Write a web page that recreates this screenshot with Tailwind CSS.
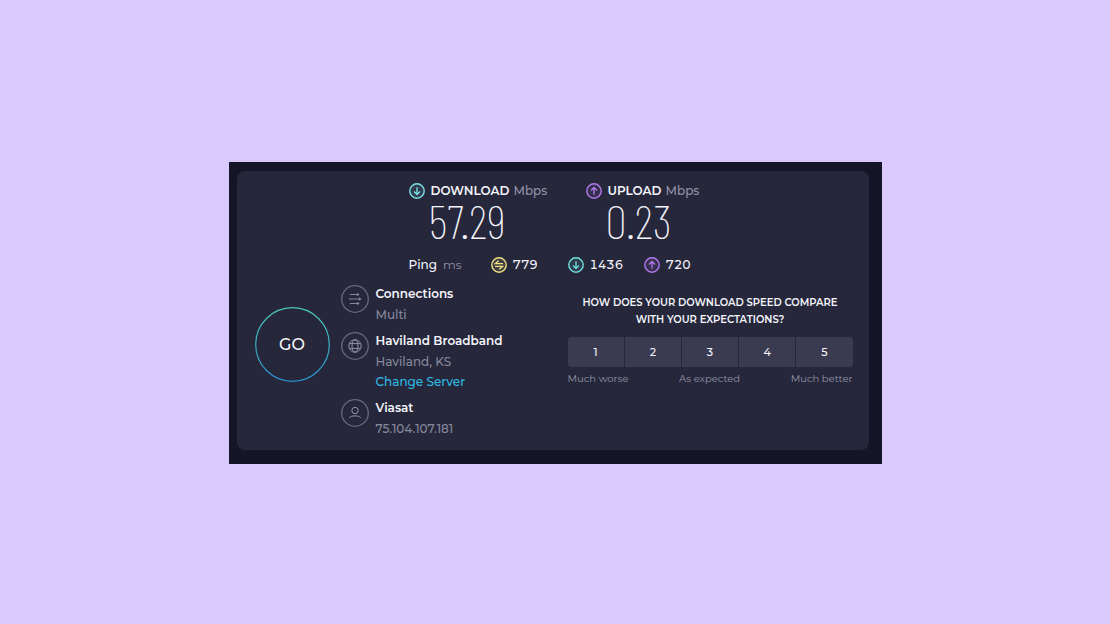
<!DOCTYPE html>
<html lang="en">
  <head>
    <meta charset="UTF-8" />
    <meta name="viewport" content="width=device-width, initial-scale=1.0" />
    <title>Speed Test Result</title>
    <script src="https://cdn.jsdelivr.net/npm/@tailwindcss/browser@4"></script>
  </head>
  <body
    class="min-h-screen bg-[#dac9fd] flex items-center justify-center pt-0.5 font-['Montserrat','Inter',sans-serif] text-[#f4f4fa]"
  >
    <!-- Shared icons -->
    <svg class="hidden">
      <symbol id="icon-arrow" viewBox="0 0 16 16">
        <circle cx="8" cy="8" r="7.2" fill="currentColor" fill-opacity="0.12" stroke="currentColor" stroke-width="1.4" />
        <path d="M8 4.2v7.2M5 8.5l3 3 3-3" fill="none" stroke="currentColor" stroke-width="1.3" />
      </symbol>
      <symbol id="icon-ping" viewBox="0 0 16 16">
        <circle cx="8" cy="8" r="7.2" fill="currentColor" fill-opacity="0.12" stroke="currentColor" stroke-width="1.4" />
        <path d="M12 6.7H4.3l3.4-3M4 9.3h7.7l-3.4 3" fill="none" stroke="currentColor" stroke-width="1.3" />
      </symbol>
    </svg>

    <main class="w-full max-w-[653px] bg-[#141526] pt-[9px] pr-[13px] pb-[14px] pl-2">
      <div class="bg-[#26273b] rounded-lg pt-3 pr-4 pb-[11px] pl-[18px]">
        <!-- Results -->
        <section class="pl-[154px]">
          <div class="flex">
            <div class="w-[177px]">
              <h2 class="flex items-center text-xs leading-4 font-semibold whitespace-nowrap">
                <svg class="size-4 mr-1.5 text-[#7ee0e6]"><use href="#icon-arrow" /></svg>
                DOWNLOAD
                <span class="ml-1 font-medium text-[#9193a8]">Mbps</span>
              </h2>
              <p class="pl-5 text-[48px] leading-[42px] font-extralight font-['Barlow_Condensed','Roboto_Condensed',sans-serif]">57.29</p>
            </div>
            <div>
              <h2 class="flex items-center text-xs leading-4 font-semibold whitespace-nowrap">
                <svg class="size-4 mr-1.5 rotate-180 text-[#b278ee]"><use href="#icon-arrow" /></svg>
                UPLOAD
                <span class="ml-1 font-medium text-[#9193a8]">Mbps</span>
              </h2>
              <p class="pl-5 text-[48px] leading-[42px] font-extralight font-['Barlow_Condensed','Roboto_Condensed',sans-serif]">0.23</p>
            </div>
          </div>
          <div class="flex items-center mt-3.5 text-xs leading-5 font-medium tabular-nums">
            <p class="flex gap-1.5 w-[82px]">Ping <span class="font-normal text-[#9193a8]">ms</span></p>
            <p class="flex items-center gap-1.5 w-[77px]">
              <svg class="size-4 text-[#f0e184]"><use href="#icon-ping" /></svg>779
            </p>
            <p class="flex items-center gap-1.5 w-[76px]">
              <svg class="size-4 text-[#6fe0dd]"><use href="#icon-arrow" /></svg>1436
            </p>
            <p class="flex items-center gap-1.5">
              <svg class="size-4 rotate-180 text-[#b278ee]"><use href="#icon-arrow" /></svg>720
            </p>
          </div>
        </section>

        <div class="flex items-start mt-2">
          <button
            type="button"
            class="relative mt-6 size-[75px] shrink-0 rounded-full pt-px text-base font-medium cursor-pointer"
          >
            <svg class="absolute inset-0 size-full" viewBox="0 0 75 75" fill="none">
              <defs>
                <linearGradient id="ring" x1="0" y1="0" x2="0" y2="1">
                  <stop offset="0" stop-color="#4bc7b5" />
                  <stop offset="1" stop-color="#2992cd" />
                </linearGradient>
              </defs>
              <circle cx="37.5" cy="37.5" r="36.8" stroke="url(#ring)" stroke-width="1.2" />
            </svg>
            GO
          </button>

          <!-- Connection details -->
          <ul class="flex flex-col gap-[5px] ml-[11px] text-xs leading-5 font-medium text-[#85879c]">
            <li class="flex gap-[7px]">
              <svg class="size-7 mt-0.5 shrink-0" viewBox="0 0 28 28" fill="none" stroke="#85879c">
                <circle cx="14" cy="14" r="13.3" stroke="#686980" stroke-width="1.3" />
                <path d="M9 9.5h8M8 14h11M9 18.5h8" />
                <path d="M16 7.8l2.7 1.7-2.7 1.7zM18 12.3l2.7 1.7-2.7 1.7zM16 16.8l2.7 1.7-2.7 1.7z" fill="#85879c" stroke="none" />
              </svg>
              <div>
                <h3 class="leading-[22px] font-semibold text-[#f4f4fa]">Connections</h3>
                <p>Multi</p>
              </div>
            </li>
            <li class="flex gap-[7px]">
              <svg class="size-7 mt-0.5 shrink-0" viewBox="0 0 28 28" fill="none" stroke="#9193a8">
                <circle cx="14" cy="14" r="13.3" stroke="#686980" stroke-width="1.3" />
                <circle cx="14" cy="14" r="6.2" />
                <ellipse cx="14" cy="14" rx="3" ry="6.2" />
                <path d="M8.5 11.6h11M8.5 16.4h11" />
              </svg>
              <div>
                <h3 class="leading-[22px] font-semibold text-[#f4f4fa]">Haviland Broadband</h3>
                <p>Haviland, KS</p>
                <a href="#" class="block text-[#2fbbe6]">Change Server</a>
              </div>
            </li>
            <li class="flex gap-[7px]">
              <svg class="size-7 mt-0.5 shrink-0" viewBox="0 0 28 28" fill="none" stroke="#9193a8">
                <circle cx="14" cy="14" r="13.3" stroke="#686980" stroke-width="1.3" />
                <circle cx="14" cy="11.5" r="3.2" />
                <path d="M8.2 18.8c1.3-1.3 3.2-1.9 5.8-1.9s4.5.6 5.8 1.9" />
              </svg>
              <div>
                <h3 class="leading-[22px] font-semibold text-[#f4f4fa]">Viasat</h3>
                <p>75.104.107.181</p>
              </div>
            </li>
          </ul>

          <!-- Survey -->
          <section class="ml-auto mt-[11px] w-[285px]">
            <h2 class="text-[10px] leading-[17px] font-semibold text-center">
              HOW DOES YOUR DOWNLOAD SPEED COMPARE<br />WITH YOUR EXPECTATIONS?
            </h2>
            <div class="grid grid-cols-5 gap-px mt-[9px] rounded-sm overflow-hidden text-[11px] font-medium">
              <button type="button" class="h-[30px] bg-[#3a3b50] cursor-pointer">1</button>
              <button type="button" class="h-[30px] bg-[#3a3b50] cursor-pointer">2</button>
              <button type="button" class="h-[30px] bg-[#3a3b50] cursor-pointer">3</button>
              <button type="button" class="h-[30px] bg-[#3a3b50] cursor-pointer">4</button>
              <button type="button" class="h-[30px] bg-[#3a3b50] cursor-pointer">5</button>
            </div>
            <div class="flex justify-between mt-1 text-[10px] leading-4 text-[#9193a8]">
              <span>Much worse</span>
              <span>As expected</span>
              <span>Much better</span>
            </div>
          </section>
        </div>
      </div>
    </main>
  </body>
</html>
